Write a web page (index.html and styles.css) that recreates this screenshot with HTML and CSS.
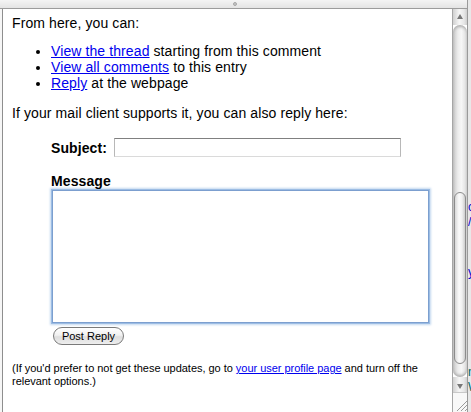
FILE: index.html
```html
<!DOCTYPE html>
<html lang="en">
<head>
  <meta charset="UTF-8">
  <meta name="viewport" content="width=device-width, initial-scale=1.0">
  <title>Reply to comment</title>
  <link rel="stylesheet" href="styles.css">
</head>
<body>
  <div class="screen">
    <div class="window">
      <div class="titlebar"><span class="title-dot"></span></div>
      <div class="body-row">
        <div class="pane">
          <p class="intro">From here, you can:</p>
          <ul class="actions">
            <li><a href="#">View the thread</a> starting from this comment</li>
            <li><a href="#">View all comments</a> to this entry</li>
            <li><a href="#">Reply</a> at the webpage</li>
          </ul>
          <p class="reply-note">If your mail client supports it, you can also reply here:</p>
          <form class="reply-form">
            <div class="subject-row">
              <label for="subject">Subject:</label>
              <input type="text" id="subject">
            </div>
            <label class="message-label" for="message">Message</label>
            <textarea id="message"></textarea>
            <button type="button" class="post-btn">Post Reply</button>
          </form>
          <p class="footnote">(If you'd prefer to not get these updates, go to <a href="#">your user profile page</a> and turn off the relevant options.)</p>
        </div>
        <div class="scrollbar">
          <div class="sb-btn sb-up"><span class="arrow-up"></span></div>
          <div class="sb-track">
            <div class="sb-thumb"></div>
          </div>
          <div class="sb-btn sb-down"><span class="arrow-down"></span></div>
          <div class="sb-grip">
            <svg width="15" height="19" viewBox="0 0 15 19">
              <path d="M4 18 L14 8 M8 18 L14 12 M12 18 L14 16" stroke="#9a9a9a" stroke-width="1" fill="none"/>
            </svg>
          </div>
        </div>
      </div>
    </div>
    <div class="behind">
      <span class="b-link b1">c</span>
      <span class="b-link b2">/</span>
      <span class="b-link b3">y</span>
      <span class="b-teal b4">n</span>
      <span class="b-teal b5">W</span>
    </div>
  </div>
</body>
</html>
```

FILE: styles.css
```css
/* Mail reply popup */
body {
  margin: 0;
  font-family: 'Liberation Sans', Arial, sans-serif;
  background: #f2f2f2;
  overflow: hidden;
}

.screen {
  display: flex;
  width: 471px;
  height: 412px;
}

.window {
  width: 467px;
  display: flex;
  flex-direction: column;
}

.titlebar {
  height: 9px;
  background: linear-gradient(to bottom, #f4f4f4, #e4e4e4);
  border-bottom: 1px solid #9c9c9c;
  display: flex;
  justify-content: center;
  align-items: center;
}

.title-dot {
  width: 4px;
  height: 4px;
  border-radius: 50%;
  background: #c4c4c4;
  border: 1px solid #a8a8a8;
  box-sizing: border-box;
  margin-left: 2px;
}

.body-row {
  flex: 1;
  display: flex;
  padding-left: 2px;
  background: #f6f6f6;
}

.pane {
  width: 440px;
  background: #fff;
  border-left: 1px solid #8e8e8e;
  padding: 6px 0 0 9px;
  font-size: 14px;
  line-height: 16px;
  letter-spacing: 0.1px;
  color: #000;
}

.pane p {
  margin: 0;
}

a {
  color: #0000ee;
}

.actions {
  margin: 12px 0 0;
  padding-left: 39px;
}

.reply-note {
  margin-top: 14px !important;
}

.reply-form {
  margin: 17px 0 0 39px;
}

.subject-row {
  display: flex;
  align-items: center;
  gap: 6px;
  height: 19px;
  font-weight: bold;
}

.subject-row label {
  min-width: 57px;
}

.subject-row input {
  width: 287px;
  height: 19px;
  box-sizing: border-box;
  margin: 0;
  border: 1px solid #b8b8b8;
  border-top-color: #808080;
  border-bottom-color: #dadada;
  padding: 0 3px;
  font-size: 12px;
}

.message-label {
  display: block;
  font-weight: bold;
  margin-top: 16px;
}

.reply-form textarea {
  display: block;
  width: 377px;
  height: 133px;
  box-sizing: border-box;
  margin: 1px 0 0 1px;
  border: 1px solid #7c9fcf;
  box-shadow: 0 0 0 1px #9cbde4, 0 0 2px 2px #c4d8ef;
  resize: none;
  outline: none;
  padding: 2px;
}

.post-btn {
  display: block;
  margin: 4px 0 0 2px;
  width: 71px;
  height: 18px;
  box-sizing: border-box;
  padding: 0;
  border: 1px solid #7a7a7a;
  border-radius: 9px;
  background: linear-gradient(to bottom, #ffffff 0%, #f1f1f1 45%, #dedede 55%, #eeeeee 100%);
  font-family: 'Liberation Sans', Arial, sans-serif;
  font-size: 11px;
  line-height: 16px;
  color: #000;
}

.footnote {
  margin-top: 17px !important;
  font-size: 11px;
  line-height: 13px;
  letter-spacing: -0.03px;
  width: 420px;
}

.scrollbar {
  width: 15px;
  display: flex;
  flex-direction: column;
  border-left: 1px solid #a6a6a6;
  box-sizing: border-box;
  background: #fff;
}

.sb-btn {
  display: flex;
  justify-content: center;
  align-items: center;
  background: linear-gradient(to right, #d0d0d0, #f6f6f6 45%, #e6e6e6 80%, #cfcfcf);
}

.sb-up {
  height: 16px;
  align-items: flex-start;
  padding-top: 5px;
  box-sizing: border-box;
}

.sb-down {
  height: 15px;
  align-items: flex-end;
  padding-bottom: 3px;
  box-sizing: border-box;
}

.arrow-up {
  width: 0;
  height: 0;
  border-left: 3px solid transparent;
  border-right: 3px solid transparent;
  border-bottom: 5px solid #777;
}

.arrow-down {
  width: 0;
  height: 0;
  border-left: 3px solid transparent;
  border-right: 3px solid transparent;
  border-top: 5px solid #777;
}

.sb-track {
  height: 352px;
  background: linear-gradient(to right, #c6c6c6, #ececec 35%, #f7f7f7 60%, #dcdcdc);
  border-radius: 7px;
  box-shadow: inset 0 3px 3px -1px #b0b0b0, inset 0 -3px 3px -1px #b0b0b0;
  padding-top: 167px;
  box-sizing: border-box;
}

.sb-thumb {
  height: 170px;
  margin: 0 1px;
  border: 1px solid #8c8c8c;
  border-radius: 7px;
  background: linear-gradient(to right, #d8d8d8, #fbfbfb 40%, #f0f0f0 70%, #cdcdcd);
}

.sb-grip {
  flex: 1;
  border-top: 1px solid #c8c8c8;
  background: #f8f8f8;
}

.sb-grip svg {
  display: block;
}

.behind {
  width: 4px;
  background: #e8e8e8;
  border-left: 1px solid #9a9a9a;
  box-sizing: border-box;
  overflow: hidden;
  display: flex;
  flex-direction: column;
  font-size: 12px;
  line-height: 14px;
}

.behind span {
  display: block;
  height: 14px;
}

.b-link {
  color: #0000cc;
}

.b-teal {
  color: #006666;
}

.b1 {
  margin-top: 200px;
}

.b2 {
  margin-top: 1px;
}

.b3 {
  margin-top: 36px;
}

.b4 {
  margin-top: 86px;
}

.b5 {
  margin-top: 1px;
}
```
